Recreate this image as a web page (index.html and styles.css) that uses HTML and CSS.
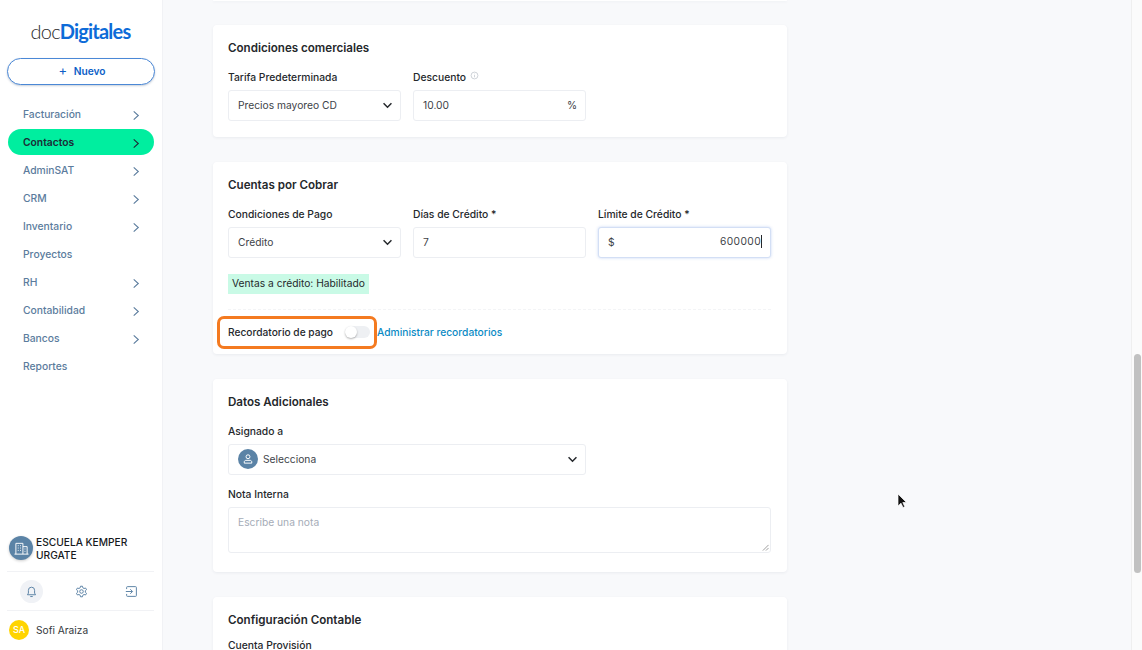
FILE: index.html
```html
<!DOCTYPE html>
<html lang="en">
<head>
    <meta charset="UTF-8">
    <meta name="viewport" content="width=device-width, initial-scale=1.0">
    <title>docDigitales - Contactos</title>
    <link rel="stylesheet" href="styles.css">
</head>
<body>
    <aside class="sidebar">
        <div class="logo"><span class="logo-doc">doc</span><span class="logo-digitales">Digitales</span></div>
        <button class="new-button"><span class="new-plus">+</span> Nuevo</button>
        <nav class="nav">
            <a class="nav-item">Facturación<svg class="chev" viewBox="0 0 8 12"><path d="M1.500 1.500 6.500 6 1.500 10.500"/></svg></a>
            <a class="nav-item active">Contactos<svg class="chev" viewBox="0 0 8 12"><path d="M1.500 1.500 6.500 6 1.500 10.500"/></svg></a>
            <a class="nav-item">AdminSAT<svg class="chev" viewBox="0 0 8 12"><path d="M1.500 1.500 6.500 6 1.500 10.500"/></svg></a>
            <a class="nav-item">CRM<svg class="chev" viewBox="0 0 8 12"><path d="M1.500 1.500 6.500 6 1.500 10.500"/></svg></a>
            <a class="nav-item">Inventario<svg class="chev" viewBox="0 0 8 12"><path d="M1.500 1.500 6.500 6 1.500 10.500"/></svg></a>
            <a class="nav-item">Proyectos</a>
            <a class="nav-item">RH<svg class="chev" viewBox="0 0 8 12"><path d="M1.500 1.500 6.500 6 1.500 10.500"/></svg></a>
            <a class="nav-item">Contabilidad<svg class="chev" viewBox="0 0 8 12"><path d="M1.500 1.500 6.500 6 1.500 10.500"/></svg></a>
            <a class="nav-item">Bancos<svg class="chev" viewBox="0 0 8 12"><path d="M1.500 1.500 6.500 6 1.500 10.500"/></svg></a>
            <a class="nav-item">Reportes</a>
        </nav>
        <div class="company">
            <div class="company-icon">
                <svg viewBox="0 0 16 16" width="15" height="15"><path d="M2 14V2.500h7.500V14M9.500 6h4.500v8M.5 14h15M4 5h1M6.500 5h1M4 7.500h1M6.500 7.500h1M4 10h1M6.500 10h1M11.200 8.500h1M11.200 11h1"/></svg>
            </div>
            <div class="company-name">ESCUELA KEMPER URGATE</div>
        </div>
        <div class="tools">
            <div class="tool tool-on">
                <svg viewBox="0 0 16 16" width="13" height="13"><path d="M3 12h10l-1.200-2V6.500a3.800 3.800 0 0 0-7.600 0V10zM6.500 14.200h3"/></svg>
            </div>
            <div class="tool">
                <svg viewBox="0 0 16 16" width="13" height="13"><path d="M6.800 1.500h2.400l.4 1.900 1.500.9 1.900-.6 1.200 2.100-1.500 1.300v1.800l1.500 1.300-1.200 2.100-1.900-.6-1.500.9-.4 1.900H6.800l-.4-1.900-1.500-.9-1.900.6-1.200-2.100 1.500-1.300V7.100L1.800 5.800 3 3.700l1.900.6 1.500-.9z"/><circle cx="8" cy="8" r="2.200"/></svg>
            </div>
            <div class="tool">
                <svg viewBox="0 0 16 16" width="13" height="13"><path d="M2 5V3a1 1 0 0 1 1-1h10a1 1 0 0 1 1 1v10a1 1 0 0 1-1 1H3a1 1 0 0 1-1-1v-2M1 8h8M6.500 5.200 9.300 8l-2.800 2.800"/></svg>
            </div>
        </div>
        <div class="user">
            <div class="user-avatar">SA</div>
            <div class="user-name">Sofi Araiza</div>
        </div>
    </aside>

    <main class="main-content">
        <div class="cards">
            <section class="card card-stub"></section>

            <section class="card card-comercial">
                <h2 class="card-title">Condiciones comerciales</h2>
                <div class="field-row">
                    <div class="field">
                        <label class="field-label">Tarifa Predeterminada</label>
                        <div class="input">Precios mayoreo CD
                            <svg class="select-chev" viewBox="0 0 12 8"><path d="M1.500 1.500 6 6l4.500-4.500"/></svg>
                        </div>
                    </div>
                    <div class="field">
                        <label class="field-label">Descuento
                            <svg class="info" viewBox="0 0 10 10"><circle cx="5" cy="5" r="3.800"/><path d="M5 4.500v2.500M5 3v.6"/></svg>
                        </label>
                        <div class="input">10.00<span class="input-suffix">%</span></div>
                    </div>
                </div>
            </section>

            <section class="card card-cobrar">
                <h2 class="card-title">Cuentas por Cobrar</h2>
                <div class="field-row">
                    <div class="field">
                        <label class="field-label">Condiciones de Pago</label>
                        <div class="input">Crédito
                            <svg class="select-chev" viewBox="0 0 12 8"><path d="M1.500 1.500 6 6l4.500-4.500"/></svg>
                        </div>
                    </div>
                    <div class="field">
                        <label class="field-label">Días de Crédito *</label>
                        <div class="input">7</div>
                    </div>
                    <div class="field">
                        <label class="field-label">Límite de Crédito *</label>
                        <div class="input input-focus">$<span class="input-suffix">600000<span class="caret"></span></span></div>
                    </div>
                </div>
                <div class="status-tag">Ventas a crédito: Habilitado</div>
                <hr class="divider">
                <div class="reminder-row">
                    <div class="reminder-box">
                        <span class="reminder-label">Recordatorio de pago</span>
                        <span class="switch"><span class="switch-knob"></span></span>
                    </div>
                    <a class="reminder-link">Administrar recordatorios</a>
                </div>
            </section>

            <section class="card card-datos">
                <h2 class="card-title">Datos Adicionales</h2>
                <label class="field-label">Asignado a</label>
                <div class="input input-assign">
                    <span class="assign-icon">
                        <svg viewBox="0 0 16 16" width="12" height="12"><circle cx="8" cy="5" r="2.600"/><path d="M3 13.500v-1.500c0-1.300 1-2.200 2.300-2.200h5.400c1.300 0 2.300.9 2.300 2.200v1.500z"/></svg>
                    </span>
                    Selecciona
                    <svg class="select-chev" viewBox="0 0 12 8"><path d="M1.500 1.500 6 6l4.500-4.500"/></svg>
                </div>
                <label class="field-label note-label">Nota Interna</label>
                <div class="textarea">Escribe una nota
                    <svg class="grip" viewBox="0 0 8 8"><path d="M7.500 1 1 7.500M7.500 4.500 4.500 7.500"/></svg>
                </div>
            </section>

            <section class="card card-contable">
                <h2 class="card-title">Configuración Contable</h2>
                <label class="field-label">Cuenta Provisión</label>
            </section>
        </div>
        <div class="scroll-track"><div class="scroll-thumb"></div></div>
    </main>

    <svg class="cursor" viewBox="0 0 12 16" width="12" height="16"><path d="M1 1v12l3-2.800L6 14.500l1.800-.8-2-4.200H9.500z"/></svg>
</body>
</html>
```

FILE: styles.css
```css
* {
    margin: 0;
    padding: 0;
    box-sizing: border-box;
    font-family: Inter, "Liberation Sans", sans-serif;
}

html, body {
    height: 100%;
    overflow: hidden;
}

body {
    display: flex;
    background-color: #f8f9fb;
    color: #25282c;
}

/* sidebar */
.sidebar {
    width: 163px;
    height: 650px;
    flex-shrink: 0;
    background-color: #fff;
    border-right: 1px solid #f1f2f5;
    padding: 0 8px 0 7px;
    display: flex;
    flex-direction: column;
}

.logo {
    height: 26px;
    margin-top: 18px;
    text-align: center;
    font-size: 20px;
    line-height: 26px;
    letter-spacing: -0.8px;
    white-space: nowrap;
}

.logo-doc {
    font-family: Lato, sans-serif;
    font-weight: 300;
    color: #2b2b2b;
}

.logo-digitales {
    font-family: Lato, sans-serif;
    font-weight: 700;
    color: #0d6bd8;
}

.new-button {
    width: 148px;
    height: 27px;
    margin-top: 14px;
    padding: 0 0 3px 2px;
    border: 1px solid #4b88d6;
    border-radius: 14px;
    background: #fff;
    box-shadow: 0 1px 2px rgba(40, 70, 110, 0.25);
    color: #0d5fc7;
    font-size: 10.200px;
    font-weight: 600;
}

.new-plus {
    font-weight: 400;
    font-size: 13px;
    margin-right: 4px;
}

.nav {
    margin: 16px 0 0 1px;
    display: flex;
    flex-direction: column;
    gap: 2px;
}

.nav-item {
    height: 26px;
    padding: 0 14px 0 15px;
    border-radius: 13px;
    display: flex;
    align-items: center;
    justify-content: space-between;
    color: #5b7c9d;
    font-size: 10.300px;
    font-weight: 500;
}

.nav-item.active {
    background-color: #00ee9f;
    color: #1c2b36;
    font-weight: 600;
}

.chev {
    width: 8px;
    height: 11px;
    margin-top: 2px;
    fill: none;
    stroke: currentColor;
    stroke-width: 1.200;
}

.company {
    margin-top: auto;
    display: flex;
    align-items: center;
    gap: 3px;
    padding: 0 0 9px 2px;
    border-bottom: 1px solid #f1f2f5;
}

.company-icon {
    width: 24px;
    height: 24px;
    border-radius: 50%;
    background: #5b83a6;
    display: flex;
    align-items: center;
    justify-content: center;
    flex-shrink: 0;
    box-shadow: 0 1px 3px rgba(0, 0, 0, 0.2);
}

.company-icon svg {
    fill: none;
    stroke: #fff;
    stroke-width: 1;
}

.company-name {
    padding-top: 2px;
    font-size: 10.200px;
    font-weight: 500;
    line-height: 13px;
    color: #16191c;
}

.tools {
    height: 39px;
    display: flex;
    align-items: center;
    gap: 27px;
    padding-left: 13px;
    border-bottom: 1px solid #f1f2f5;
}

.tool {
    width: 23px;
    height: 23px;
    border-radius: 50%;
    display: flex;
    align-items: center;
    justify-content: center;
}

.tool-on {
    background: #f0f2f6;
}

.tool svg {
    fill: none;
    stroke: #5b83a6;
    stroke-width: 1.200;
}

.user {
    height: 39px;
    display: flex;
    align-items: center;
    gap: 7px;
    padding: 0 0 2px 2px;
}

.user-avatar {
    width: 20px;
    height: 20px;
    border-radius: 50%;
    background: #ffd400;
    color: #fff;
    font-size: 9px;
    font-weight: 500;
    display: flex;
    align-items: center;
    justify-content: center;
}

.user-name {
    font-size: 10.200px;
    color: #33383d;
}

/* main */
.main-content {
    flex: 1;
    min-width: 0;
    height: 650px;
    overflow: hidden;
    display: flex;
    justify-content: space-between;
}

.cards {
    width: 574px;
    margin-left: 50px;
    display: flex;
    flex-direction: column;
    gap: 25px;
}

.card {
    flex-shrink: 0;
    background: #fff;
    border-radius: 4px;
    box-shadow: 0 1px 3px rgba(40, 60, 90, 0.07);
    padding: 16px 16px 0 15px;
}

.card-stub {
    height: 1px;
    padding: 0;
    margin-bottom: -1px;
}

.card-comercial {
    height: 112px;
}

.card-cobrar {
    height: 192px;
}

.card-datos {
    height: 193px;
}

.card-contable {
    height: 80px;
}

.card-title {
    font-size: 11.600px;
    font-weight: 600;
    line-height: 15px;
    color: #25282c;
}

.field-row {
    display: flex;
    gap: 12px;
    margin-top: 15px;
}

.field {
    width: 173px;
    flex-shrink: 0;
}

.field-label {
    display: block;
    height: 13px;
    font-size: 10.300px;
    font-weight: 500;
    line-height: 13px;
    color: #25282c;
}

.info {
    width: 9px;
    height: 9px;
    margin-left: 1px;
    vertical-align: top;
    fill: none;
    stroke: #b4bac3;
    stroke-width: 0.700;
}

.input {
    position: relative;
    height: 31px;
    margin-top: 6px;
    padding: 0 8px 2px 9px;
    border: 1px solid #eceef2;
    border-radius: 3px;
    background: #fff;
    display: flex;
    align-items: center;
    font-size: 10.250px;
    color: #3d4248;
}

.input-suffix {
    margin-left: auto;
}

.input-focus {
    border-color: #d3dff5;
    box-shadow: 0 0 3px rgba(70, 120, 220, 0.3);
}

.input-focus .input-suffix {
    letter-spacing: 0.4px;
}

.caret {
    display: inline-block;
    width: 1px;
    height: 13px;
    background: #25282c;
    vertical-align: -3px;
}

.select-chev {
    position: absolute;
    right: 7px;
    top: 11px;
    width: 11px;
    height: 7px;
    fill: none;
    stroke: #25282c;
    stroke-width: 1.700;
}

.status-tag {
    display: inline-block;
    margin-top: 16px;
    padding: 0 4px;
    height: 20px;
    line-height: 19px;
    background: #c9fae6;
    font-size: 10.250px;
    color: #25282c;
    vertical-align: top;
}

.divider {
    border: none;
    border-top: 1px dashed #f3f4f6;
    margin-top: 15px;
}

.reminder-row {
    display: flex;
    align-items: center;
    margin: 6px 0 0 -11px;
}

.reminder-box {
    width: 160px;
    height: 33px;
    padding: 0 0 1px 8px;
    border: 3px solid #f47a20;
    border-radius: 7px;
    display: flex;
    align-items: center;
    gap: 12px;
}

.reminder-label {
    font-size: 10.200px;
    font-weight: 500;
    color: #25282c;
    white-space: nowrap;
}

.switch {
    position: relative;
    width: 25px;
    height: 12px;
    border-radius: 6px;
    background: #eef0f3;
    flex-shrink: 0;
}

.switch-knob {
    position: absolute;
    left: 0;
    top: 0;
    width: 12px;
    height: 12px;
    border-radius: 50%;
    background: #fff;
    box-shadow: 0 1px 2px rgba(0, 0, 0, 0.3);
}

.reminder-link {
    padding-bottom: 1px;
    font-size: 10.250px;
    font-weight: 500;
    color: #0a8ac4;
    white-space: nowrap;
}

.card-datos .card-title {
    margin-bottom: 15px;
}

.input-assign {
    width: 358px;
    padding-left: 9px;
    gap: 5px;
}

.assign-icon {
    width: 20px;
    height: 20px;
    border-radius: 50%;
    background: #5b83a6;
    display: flex;
    align-items: center;
    justify-content: center;
}

.assign-icon svg {
    fill: none;
    stroke: #fff;
    stroke-width: 1.300;
}

.note-label {
    margin-top: 13px;
}

.textarea {
    position: relative;
    height: 46px;
    margin-top: 6px;
    padding: 8px 9px;
    border: 1px solid #eceef2;
    border-radius: 3px;
    font-size: 10.250px;
    color: #a5acb7;
}

.grip {
    position: absolute;
    right: 1px;
    bottom: 1px;
    width: 7px;
    height: 7px;
    fill: none;
    stroke: #777;
    stroke-width: 0.800;
}

.card-contable .card-title {
    margin-bottom: 11px;
}

/* scrollbar */
.scroll-track {
    width: 11px;
    height: 650px;
    background: #fbfbfb;
    border-left: 1px solid #efefef;
    padding: 354px 1px 0 2px;
}

.scroll-thumb {
    width: 7px;
    height: 219px;
    border-radius: 4px;
    background: #c1c1c1;
}

/* mouse pointer in the capture */
.cursor {
    position: absolute;
    left: 897px;
    top: 493px;
    fill: #111;
    stroke: #fff;
    stroke-width: 0.700;
}
```
